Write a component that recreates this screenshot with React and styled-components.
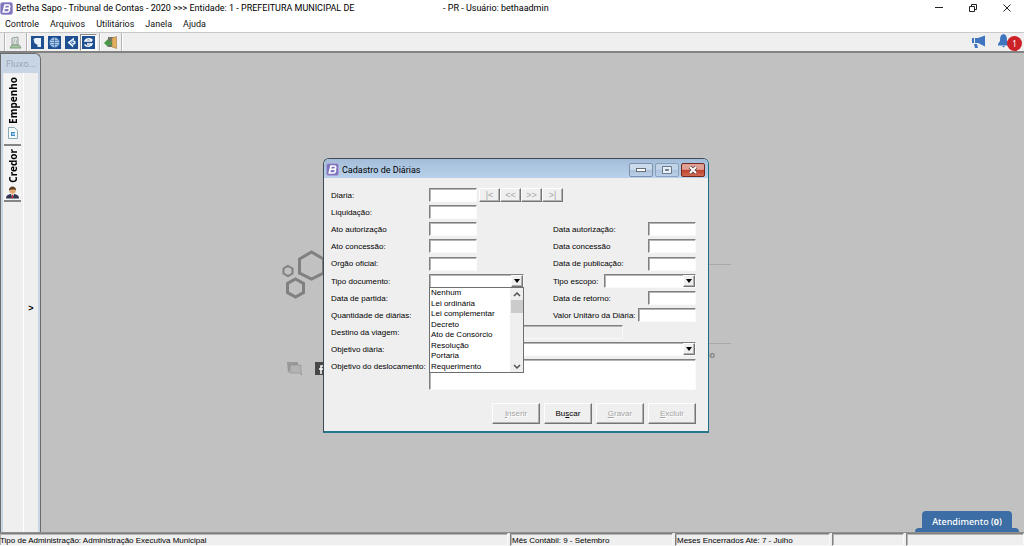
import React from 'react';
import styled, { createGlobalStyle, css } from 'styled-components';

const GlobalStyle = createGlobalStyle`
  * {
    box-sizing: border-box;
  }

  body {
    margin: 0;
    background: #c1c1c1;
  }

  button, input, select, textarea {
    font-family: inherit;
    font-size: inherit;
    color: inherit;
    border-radius: 0;
    margin: 0;
    padding: 0;
  }

  svg {
    flex: none;
  }
`;

const sunken = css`
  border: 1px solid;
  border-color: #808080 #fafafa #fafafa #808080;
  box-shadow: inset 1px 1px 0 #b4b4b4;
`;

const raised = css`
  border: 1px solid;
  border-color: #fdfdfd #757575 #757575 #fdfdfd;
  box-shadow: inset -1px -1px 0 #b0b0b0;
`;

const Shell = styled.div`
  display: flex;
  flex-direction: column;
  height: 100vh;
  overflow: hidden;
  font-family: 'Liberation Sans', Arial, sans-serif;
  font-size: 8px;
  line-height: 12px;
  color: #000;
`;

const TitleBar = styled.header`
  display: flex;
  align-items: center;
  height: 16px;
  flex: none;
  padding: 0 11px 0 0;
  background: #fff;
  font-family: Roboto, sans-serif;
  font-size: 9px;
  white-space: pre;
`;

const TitleText = styled.span`
  margin-left: 3px;
  width: ${({ $width }) => $width || 'auto'};
`;

const WindowControls = styled.div`
  display: flex;
  gap: 22px;
  margin-left: auto;
`;

const ControlButton = styled.button`
  display: flex;
  width: 12px;
  height: 12px;
  align-items: center;
  justify-content: center;
  border: 0;
  background: none;
`;

const MenuBar = styled.nav`
  display: flex;
  gap: 11px;
  height: 16px;
  flex: none;
  padding: 0 5px;
  align-items: center;
  background: #fff;
  font-family: Roboto, sans-serif;
  font-size: 9px;

  a {
    color: #111;
    text-decoration: none;
  }
`;

const ToolBar = styled.div`
  display: flex;
  align-items: center;
  height: 21px;
  flex: none;
  padding: 0 2px;
  background: #efefef;
  border-top: 1px solid #c8c8c8;
  border-bottom: 2px solid #828282;
`;

const Divider = styled.span`
  width: 2px;
  height: 18px;
  margin: 0 1px 0 2px;
  border-left: 1px solid #b2b2b2;
  border-right: 1px solid #fff;
`;

const ToolButton = styled.button`
  display: flex;
  align-items: center;
  justify-content: center;
  width: 17px;
  height: 17px;
  border: 1px solid transparent;
  background: none;

  ${({ $active }) => $active && css`
    border-color: #8a8a8a #fff #fff #8a8a8a;
    background: #fafafa;
  `}
`;

const Notices = styled.div`
  display: flex;
  align-items: center;
  gap: 12px;
  margin-left: auto;
`;

const BellButton = styled.button`
  display: flex;
  position: relative;
  width: 24px;
  height: 16px;
  border: 0;
  background: none;
`;

const Count = styled.span`
  position: absolute;
  right: 0;
  top: 2px;
  width: 15px;
  height: 15px;
  border-radius: 50%;
  background: #cc2127;
  color: #fff;
  font-family: 'Noto Sans', sans-serif;
  font-size: 8px;
  line-height: 15px;
  text-align: center;
`;

const Workspace = styled.main`
  position: relative;
  display: flex;
  flex: 1;
  min-height: 0;
  background: #c1c1c1;
`;

const SidePanel = styled.aside`
  display: flex;
  flex-direction: column;
  width: 41px;
  border: 1px solid #6c6c6c;
  border-bottom: 0;
  border-radius: 0 6px 0 0;
  background: #c7d5e5;
  padding: 1px 2px 0 2px;
`;

const PanelTitle = styled.div`
  height: 18px;
  padding: 0 3px;
  color: #9ba6b2;
  font-family: 'Noto Sans', sans-serif;
  font-size: 9px;
  line-height: 18px;
`;

const PanelBody = styled.div`
  display: flex;
  flex: 1;
  background: #efefef;
`;

const Tabs = styled.div`
  display: flex;
  flex-direction: column;
  width: 21px;
  padding: 1px 2px 0 1px;
  border-right: 1px solid #fff;
`;

const Tab = styled.button`
  display: flex;
  flex-direction: column;
  align-items: center;
  gap: 3px;
  height: ${({ $height }) => $height};
  padding: 3px 0 0;
  border: 0;
  border-bottom: 2px solid #858585;
  background: #f4f4f4;
`;

const TabLabel = styled.span`
  writing-mode: vertical-rl;
  transform: rotate(180deg);
  font-family: 'Noto Sans', sans-serif;
  font-size: 10px;
  font-weight: bold;
  line-height: 14px;
`;

const Expander = styled.button`
  flex: 1;
  padding-top: 10px;
  border: 0;
  background: none;
  font-size: 9px;
  font-weight: bold;
`;

const Backdrop = styled.svg`
  position: absolute;
  left: 270px;
  top: 187px;
`;

const Dialog = styled.section`
  position: absolute;
  left: 323px;
  top: 105px;
  width: 386px;
  border: 1px solid #3e4a54;
  border-right-color: #1c6f80;
  border-bottom: 2px solid #24788a;
  border-radius: 6px 6px 0 0;
  background: #efefef;
`;

const DialogTitle = styled.div`
  display: flex;
  align-items: center;
  gap: 3px;
  height: 19px;
  padding: 2px 3px 0 2px;
  border-radius: 5px 5px 0 0;
  background: linear-gradient(#a3bdd9, #b9d1ea);
  font-family: Roboto, sans-serif;
  font-size: 9px;
`;

const DialogControls = styled.div`
  display: flex;
  gap: 2px;
  margin-left: auto;
`;

const DialogControl = styled.button`
  display: flex;
  align-items: center;
  justify-content: center;
  width: 24px;
  height: 14px;
  border: 1px solid ${({ $close }) => ($close ? '#6f2a22' : '#7d92aa')};
  border-radius: 2px;
  opacity: ${({ disabled }) => (disabled ? 0.7 : 1)};
  background: ${({ $close }) => ($close
    ? 'linear-gradient(#e0a093 45%, #c0402c 50%, #cf6a52)'
    : 'linear-gradient(#cbdbec 45%, #a9c0da 50%, #bcd1e8)')};
`;

const Form = styled.form`
  display: flex;
  flex-direction: column;
  gap: 3px;
  padding: 10px 12px 7px 7px;
`;

const Row = styled.div`
  display: grid;
  grid-template-columns: 98px 124px 1fr;
  min-height: ${({ $height }) => $height || '14px'};
  align-items: ${({ $align }) => $align || 'center'};
`;

const Label = styled.label`
  padding-top: ${({ $top }) => $top || '1px'};
  white-space: nowrap;
`;

const Pair = styled.div`
  grid-column: 3;
  display: flex;
  align-items: center;
  justify-content: space-between;
`;

const Cell = styled.div`
  display: flex;
  gap: 2px;
  position: relative;
  grid-column: ${({ $wide }) => ($wide ? '2 / 4' : '2')};
`;

const Input = styled.input`
  ${sunken}
  width: ${({ $width }) => $width || '48px'};
  height: 14px;
  background: #fff;

  &:disabled {
    background: #efefef;
  }
`;

const TextArea = styled.textarea`
  ${sunken}
  width: 100%;
  height: 31px;
  background: #fff;
  resize: none;
`;

const Combo = styled.div`
  ${sunken}
  position: relative;
  width: ${({ $width }) => $width || '100%'};
  height: 14px;
  background: #fff;

  select {
    display: block;
    width: 100%;
    height: 12px;
    border: 0;
    appearance: none;
    background: none;
  }
`;

const Arrow = styled.span`
  ${raised}
  position: absolute;
  right: 0;
  top: 0;
  display: flex;
  align-items: center;
  justify-content: center;
  width: 12px;
  height: 12px;
  background: #efefef;
  pointer-events: none;
`;

const NavGroup = styled.div`
  display: flex;
`;

const NavButton = styled.button`
  ${raised}
  width: 21px;
  height: 14px;
  background: #efefef;
  color: #a6a6a6;
  font-size: 9px;
  line-height: 11px;
`;

const DropList = styled.div`
  position: absolute;
  z-index: 1;
  left: 0;
  top: 13px;
  display: flex;
  width: 95px;
  height: 86px;
  border: 1px solid #6f6f6f;
  background: #fff;

  ul {
    display: flex;
    flex-direction: column;
    flex: 1;
    margin: 0;
    padding: 0 1px;
    list-style: none;
    white-space: nowrap;
  }

  li {
    flex: 1;
    line-height: 10px;
  }
`;

const ScrollBar = styled.div`
  display: flex;
  flex-direction: column;
  align-items: center;
  justify-content: space-between;
  width: 13px;
  padding: 3px 0 2px;
  background: #efefef;
`;

const Thumb = styled.span`
  width: 12px;
  height: 13px;
  margin: 3px 0 auto;
  background: #cbcbcb;
`;

const Actions = styled.div`
  display: flex;
  justify-content: flex-end;
  gap: 4px;
  margin-top: 10px;
`;

const ActionButton = styled.button`
  ${raised}
  width: 48px;
  height: 21px;
  background: #efefef;

  &:disabled {
    color: #a4a4a4;
    text-shadow: 1px 1px 0 #fff;
  }
`;

const Support = styled.button`
  position: absolute;
  right: 12px;
  bottom: 0;
  height: 21px;
  width: 90px;
  border: 0;
  border-radius: 4px 4px 0 0;
  background: #3c6ea5;
  color: #fff;
  font-family: 'Noto Sans', sans-serif;
  font-size: 9px;
  font-weight: 500;

  &::after {
    content: '';
    position: absolute;
    left: -7px;
    right: -7px;
    bottom: 0;
    height: 4px;
    border-radius: 4px 4px 0 0;
    background: #3c6ea5;
  }
`;

const StatusBar = styled.footer`
  display: grid;
  grid-template-columns: 508fr 163fr 155fr 72fr 118fr;
  gap: 2px;
  height: 14px;
  flex: none;
  border-top: 1px solid #909088;
  background: #efefef;
`;

const StatusCell = styled.span`
  ${sunken}
  overflow: hidden;
  padding-left: ${({ $first }) => ($first ? '0' : '1px')};
  border-left-width: ${({ $first }) => ($first ? '0' : '1px')};
  line-height: 13px;
  white-space: nowrap;
`;

const BethaLogo = () => (
  <svg width="13" height="13" viewBox="0 0 13 13">
    <rect x="0.500" y="0.500" width="12" height="12" rx="2" fill="#7d74bd" stroke="#a8a2d6" />
    <path d="M5 3h3.300c2 0 1.800 2.800.2 3.300 1.700.6 1.100 3.700-1.200 3.700H3.300z" fill="none" stroke="#fff" strokeWidth="1.700" />
    <path d="M4.500 6.300h4" stroke="#fff" strokeWidth="1.500" />
  </svg>
);

const BlueIcon = ({ kind }) => (
  <svg width="13" height="13" viewBox="0 0 13 13">
    <rect width="13" height="13" fill="#1d4f91" />
    {kind === 'book' && <path d="M2.500 3l2-1H10v9H6.500V9L3.500 7z" fill="#e8f2fb" />}
    {kind === 'globe' && (
      <g fill="#b6d0ea" stroke="#2f66a8" strokeWidth="0.700">
        <circle cx="6.500" cy="6.500" r="5" />
        <path d="M2 6.500h9M6.500 2v9M3 4.300h7M3 8.700h7" />
      </g>
    )}
    {kind === 'back' && (
      <>
        <path d="M9 1.500L2.500 6.500 8 11.500 8.500 8.500 10.500 8V5L9 4.500z" fill="#e8f2fb" />
        <path d="M8.500 4.500L5.500 6.500l2.500 2M7 6.500h2" fill="none" stroke="#3a72b5" />
      </>
    )}
    {kind === 'sync' && <path d="M10.500 4.500C8.500 2 4 2 3 5h7M2.500 8.500c2 2.500 6.500 2.500 7.500-.5H5" fill="none" stroke="#fff" strokeWidth="1.500" />}
  </svg>
);

const DownArrow = () => (
  <Arrow>
    <svg width="6" height="4" viewBox="0 0 6 4"><path d="M0 0h6L3 4z" fill="#000" /></svg>
  </Arrow>
);

const Chevron = ({ up }) => (
  <svg width="8" height="6" viewBox="0 0 8 6">
    <path d={up ? 'M1 5l3-3 3 3' : 'M1 1l3 3 3-3'} fill="none" stroke="#505050" strokeWidth="1.500" />
  </svg>
);

const Field = ({ id, label, width, disabled }) => (
  <>
    <Label htmlFor={id}>{label}</Label>
    <Input id={id} $width={width} disabled={disabled} />
  </>
);

const SelectBox = ({ id, width, options = [] }) => (
  <Combo $width={width}>
    <select id={id} defaultValue="">
      <option value="" aria-label="Vazio" />
      {options.map(option => <option key={option}>{option}</option>)}
    </select>
    <DownArrow />
  </Combo>
);

const documentTypes = [
  'Nenhum',
  'Lei ordinária',
  'Lei complementar',
  'Decreto',
  'Ato de Consórcio',
  'Resolução',
  'Portaria',
  'Requerimento',
];

const DiariasDialog = () => (
  <Dialog>
    <DialogTitle>
      <BethaLogo />
      <span>Cadastro de Diárias</span>
      <DialogControls>
        <DialogControl aria-label="Minimizar">
          <svg width="10" height="4" viewBox="0 0 10 4"><rect x="0.500" y="0.500" width="9" height="3" fill="#fff" stroke="#65707c" /></svg>
        </DialogControl>
        <DialogControl aria-label="Maximizar" disabled>
          <svg width="10" height="8" viewBox="0 0 10 8">
            <path d="M.5.5h9v7h-9z" fill="#fff" stroke="#4d5966" />
            <path d="M3.500 3.500h3v1h-3z" fill="#9fb5cc" stroke="#4d5966" />
          </svg>
        </DialogControl>
        <DialogControl aria-label="Fechar" $close>
          <svg width="10" height="8" viewBox="0 0 10 8">
            <path d="M2 1l6 6M8 1L2 7" stroke="#5c4542" strokeWidth="3.600" />
            <path d="M2 1l6 6M8 1L2 7" stroke="#fff" strokeWidth="2" />
          </svg>
        </DialogControl>
      </DialogControls>
    </DialogTitle>
    <Form onSubmit={e => e.preventDefault()}>
      <Row>
        <Label htmlFor="diaria">Diaria:</Label>
        <Cell $wide>
          <Input id="diaria" />
          <NavGroup>
            {['|<', '<<', '>>', '>|'].map(text => <NavButton key={text} type="button" disabled>{text}</NavButton>)}
          </NavGroup>
        </Cell>
      </Row>
      <Row><Field id="liquidacao" label="Liquidação:" /></Row>
      <Row>
        <Field id="ato-autorizacao" label="Ato autorização" />
        <Pair><Field id="data-autorizacao" label="Data autorização:" /></Pair>
      </Row>
      <Row>
        <Field id="ato-concessao" label="Ato concessão:" />
        <Pair><Field id="data-concessao" label="Data concessão" /></Pair>
      </Row>
      <Row $height="15px">
        <Field id="orgao" label="Orgão oficial:" />
        <Pair><Field id="data-publicacao" label="Data de publicação:" /></Pair>
      </Row>
      <Row>
        <Label htmlFor="tipo-documento">Tipo documento:</Label>
        <Cell>
          <SelectBox id="tipo-documento" width="95px" options={documentTypes} />
          <DropList>
            <ul role="listbox" aria-label="Tipo documento">
              {documentTypes.map(type => <li key={type} role="option" aria-selected="false">{type}</li>)}
            </ul>
            <ScrollBar>
              <Chevron up />
              <Thumb />
              <Chevron />
            </ScrollBar>
          </DropList>
        </Cell>
        <Pair>
          <Label htmlFor="tipo-escopo">Tipo escopo:</Label>
          <SelectBox id="tipo-escopo" width="92px" />
        </Pair>
      </Row>
      <Row>
        <Field id="data-partida" label="Data de partida:" />
        <Pair><Field id="data-retorno" label="Data de retorno:" /></Pair>
      </Row>
      <Row>
        <Field id="quantidade" label="Quantidade de diárias:" />
        <Pair><Field id="valor" label="Valor Unitáro da Diária:" width="58px" /></Pair>
      </Row>
      <Row>
        <Label htmlFor="destino">Destino da viagem:</Label>
        <Cell $wide><Input id="destino" $width="194px" disabled /></Cell>
      </Row>
      <Row>
        <Label htmlFor="objetivo">Objetivo diária:</Label>
        <Cell $wide><SelectBox id="objetivo" /></Cell>
      </Row>
      <Row $align="start">
        <Label htmlFor="deslocamento" $top="2px">Objetivo do deslocamento:</Label>
        <Cell $wide><TextArea id="deslocamento" /></Cell>
      </Row>
      <Actions>
        <ActionButton type="button" disabled><u>I</u>nserir</ActionButton>
        <ActionButton type="button">Bu<u>s</u>car</ActionButton>
        <ActionButton type="button" disabled><u>G</u>ravar</ActionButton>
        <ActionButton type="button" disabled><u>E</u>xcluir</ActionButton>
      </Actions>
    </Form>
  </Dialog>
);

const App = () => {
  return (
    <Shell>
      <GlobalStyle />
      <TitleBar>
        <BethaLogo />
        <TitleText $width="424px">{'Betha Sapo - Tribunal de Contas - 2020 >>> Entidade: 1 - PREFEITURA MUNICIPAL DE'}</TitleText>
        <TitleText>- PR - Usuário: bethaadmin</TitleText>
        <WindowControls>
          <ControlButton aria-label="Minimizar">
            <svg width="8" height="8" viewBox="0 0 8 8"><path d="M0 3.500h8" stroke="#222" /></svg>
          </ControlButton>
          <ControlButton aria-label="Restaurar">
            <svg width="8" height="8" viewBox="0 0 8 8"><path d="M.5 2.500h5v5h-5zM2.500 2V.5h5v5H6" fill="none" stroke="#222" /></svg>
          </ControlButton>
          <ControlButton aria-label="Fechar">
            <svg width="8" height="8" viewBox="0 0 8 8"><path d="M.5.5l7 7M7.500.5l-7 7" stroke="#222" /></svg>
          </ControlButton>
        </WindowControls>
      </TitleBar>
      <MenuBar>
        {['Controle', 'Arquivos', 'Utilitários', 'Janela', 'Ajuda'].map(item => <a key={item} href="#menu">{item}</a>)}
      </MenuBar>
      <ToolBar>
        <Divider />
        <ToolButton aria-label="Entidade">
          <svg width="13" height="13" viewBox="0 0 13 13">
            <path d="M3 2l6-1v8H3z" fill="#dde3e2" stroke="#96a09d" />
            <path d="M4 8l2-5M7 8l1-4" stroke="#b3bcb9" />
            <path d="M1 12l2-3h7l2 3z" fill="#a7c9a5" stroke="#7d9b7d" />
          </svg>
        </ToolButton>
        <Divider />
        <ToolButton aria-label="Cadastro"><BlueIcon kind="book" /></ToolButton>
        <ToolButton aria-label="Internet"><BlueIcon kind="globe" /></ToolButton>
        <ToolButton aria-label="Voltar"><BlueIcon kind="back" /></ToolButton>
        <ToolButton aria-label="Atualizar" $active><BlueIcon kind="sync" /></ToolButton>
        <Divider />
        <ToolButton aria-label="Sair">
          <svg width="13" height="13" viewBox="0 0 13 13">
            <path d="M4 1h6v10H4z" fill="#6f7466" />
            <path d="M8 2l4.500-1.500v12L8 11z" fill="#e0ae5e" stroke="#a67c40" strokeWidth="0.600" />
            <path d="M0 7l4-4v2h3.500v4H4v2z" fill="#4b9a48" />
          </svg>
        </ToolButton>
        <Divider />
        <Notices>
          <svg width="14" height="14" viewBox="0 0 14 14">
            <path d="M0 3h2v5H0zM3 3h3v5H3zM6 3l7-2.500v11L6 8zM2 9h3l1 4H3z" fill="#3f74bf" />
          </svg>
          <BellButton aria-label="Notificações">
            <svg width="11" height="14" viewBox="0 0 11 14">
              <path d="M5.500 0C9 1 8.900 4 9 7l2 3v1.500H0V10l2-3c.1-3 0-6 3.500-7zM4 12h3l-1.500 1.500z" fill="#3f74bf" />
            </svg>
            <Count>1</Count>
          </BellButton>
        </Notices>
      </ToolBar>
      <Workspace>
        <SidePanel>
          <PanelTitle>Fluxo...</PanelTitle>
          <PanelBody>
            <Tabs>
              <Tab $height="72px">
                <TabLabel>Empenho</TabLabel>
                <svg width="10" height="12" viewBox="0 0 10 12">
                  <path d="M.5.5h6l3 3v8h-9z" fill="#f3fafc" stroke="#8aa9b5" />
                  <path d="M3 5h4v4H3z" fill="#3d8cc4" />
                  <path d="M4 7h3" stroke="#fff" />
                </svg>
              </Tab>
              <Tab $height="56px">
                <TabLabel>Credor</TabLabel>
                <svg width="13" height="13" viewBox="0 0 13 13">
                  <path d="M0 12.500c0-3 2-4.500 6.500-4.500s6.500 1.500 6.500 4.500z" fill="#333554" />
                  <path d="M5 8h3l-1.500 4z" fill="#fff" />
                  <path d="M6 8.500h1l.5 3-1 1-1-1z" fill="#c43a37" />
                  <circle cx="6.500" cy="4.500" r="3.200" fill="#e3aa76" />
                  <path d="M3 4.500C2.500-1 10.500-1 10 4.500 9 3 5 3.500 3 4.500z" fill="#5e3d25" />
                </svg>
              </Tab>
            </Tabs>
            <Expander aria-label="Expandir">&gt;</Expander>
          </PanelBody>
        </SidePanel>
        <Backdrop width="470" height="160" viewBox="270 240 470 160" aria-hidden="true">
          <g fill="none" stroke="#808080" strokeWidth="3">
            <path d="M311.500 252l12 7v14l-12 6-12-6v-14z" />
            <path d="M295.500 279l8 4.500v9l-8 4.500-8-4.500v-9z" />
            <path d="M288 266l4.500 2.500v5l-4.500 2.500-4.500-2.500v-5z" strokeWidth="2" />
          </g>
          <path d="M700 264.500h31M700 343.500h31" stroke="#a9a9a9" />
          <path d="M287 362h11v8h-8l-2 3z" fill="#999" />
          <path d="M290 365h11v7l1 3-3-2h-9z" fill="#b3b3b3" stroke="#858585" strokeWidth="0.500" />
          <rect x="315" y="362" width="20" height="13" fill="#484848" />
          <path d="M323 366h-2v8M319 369h4" stroke="#fff" strokeWidth="1.500" fill="none" />
          <text x="704" y="358" fontFamily="Liberation Sans" fontSize="9" fontWeight="bold" fill="#808080">do</text>
        </Backdrop>
        <DiariasDialog />
        <Support>Atendimento (<b>0</b>)</Support>
      </Workspace>
      <StatusBar>
        <StatusCell $first>Tipo de Administração: Administração Executiva Municipal</StatusCell>
        <StatusCell>Mês Contábil: 9 - Setembro</StatusCell>
        <StatusCell>Meses Encerrados Até: 7 - Julho</StatusCell>
        <StatusCell />
        <StatusCell />
      </StatusBar>
    </Shell>
  );
};

export default App;
